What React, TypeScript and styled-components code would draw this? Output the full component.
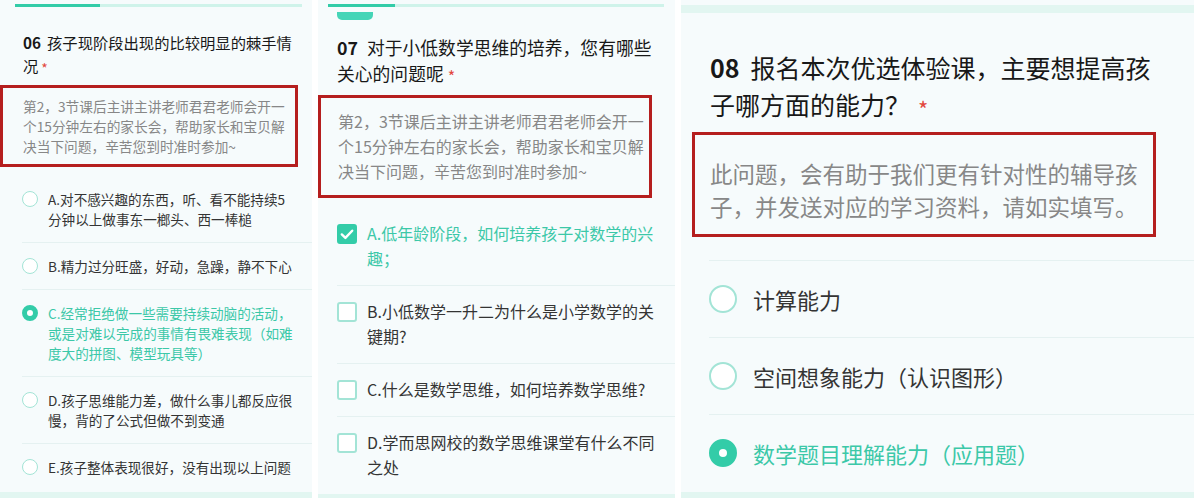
import React from "react";
import styled, { createGlobalStyle, css } from "styled-components";

const palette = {
  teal: "#33cca8",
  tealText: "#3cc8a8",
  tealRing: "#a3e4d6",
  track: "#cff3ea",
  stripe: "#e2f6f1",
  title: "#181818",
  text: "#343434",
  hint: "#878787",
  red: "#b51e1e",
  star: "#e2473d",
  rule: "#e5f1f1",
  panel: "#f6fbfc",
};

const GlobalStyle = createGlobalStyle`
  html, body {
    margin: 0;
    padding: 0;
    background: #fff;
  }
  body {
    font-family: "Noto Sans CJK SC", "Noto Sans", sans-serif;
    -webkit-font-smoothing: antialiased;
  }
  * { box-sizing: border-box; }
`;

type Kind = "radio" | "check";

interface ISize {
  width: number;
  titleSize: number;
  titleLh: number;
  titleTop: number;
  titlePad: string;
  numGap: number;
  starGap: number;
  starSize: number;
  hintSize: number;
  hintLh: number;
  hintMargin: string;
  hintPad: string;
  hintWidth: number;
  optInset: number;
  optTop: number;
  optPad: number;
  optSize: number;
  optLh: number;
  optGap: number;
  optWidth: number;
  mark: number;
  ring: number;
  dot: number;
  leadRule: boolean;
}

interface IQuestion {
  num: string;
  title: string;
  hint: string;
  options: string[];
  selected: number;
  kind: Kind;
  size: ISize;
  header: React.ReactNode;
}

const HINT =
  "第2，3节课后主讲主讲老师君君老师会开一个15分钟左右的家长会，帮助家长和宝贝解决当下问题，辛苦您到时准时参加~";

function Mark({ kind, on, size }: { kind: Kind; on: boolean; size: ISize }) {
  if (kind === "check") {
    return (
      <CheckBox $d={size.mark} $on={on} $lh={size.optLh}>
        {on && (
          <svg width={size.mark} height={size.mark} viewBox="0 0 20 20">
            <path
              d="M4.8 10.4l3.6 3.5 6.8-7.2"
              fill="none"
              stroke="#fff"
              strokeWidth="2.4"
              strokeLinecap="round"
              strokeLinejoin="round"
            />
          </svg>
        )}
      </CheckBox>
    );
  }
  return (
    <Radio
      $d={size.mark}
      $on={on}
      $ring={size.ring}
      $dot={size.dot}
      $lh={size.optLh}
    />
  );
}

function Question({
  num,
  title,
  hint,
  options,
  selected,
  kind,
  size,
  header,
}: IQuestion) {
  return (
    <Panel $w={size.width}>
      {header}
      <Title
        $size={size.titleSize}
        $lh={size.titleLh}
        $top={size.titleTop}
        $pad={size.titlePad}
      >
        <QNum $gap={size.numGap}>{num}</QNum>
        <span>{title}</span>
        <Star $gap={size.starGap} $size={size.starSize}>
          *
        </Star>
      </Title>
      <Hint
        $size={size.hintSize}
        $lh={size.hintLh}
        $margin={size.hintMargin}
        $pad={size.hintPad}
        $w={size.hintWidth}
      >
        {hint}
      </Hint>
      <OptionList $inset={size.optInset} $top={size.optTop}>
        {options.map((label, i) => (
          <OptionRow
            key={label}
            $pad={size.optPad}
            $gap={size.optGap}
            $lead={size.leadRule}
          >
            <Mark kind={kind} on={i === selected} size={size} />
            <OptionText
              $size={size.optSize}
              $lh={size.optLh}
              $w={size.optWidth}
              $on={i === selected}
            >
              {label}
            </OptionText>
          </OptionRow>
        ))}
      </OptionList>
      <Footer />
    </Panel>
  );
}

const small: ISize = {
  width: 312,
  titleSize: 15.3,
  titleLh: 23,
  titleTop: 24,
  titlePad: "0 14px 0 23px",
  numGap: 6,
  starGap: 3,
  starSize: 14,
  hintSize: 13.7,
  hintLh: 20,
  hintMargin: "8px 0 0",
  hintPad: "8px 4px 8px 20px",
  hintWidth: 298,
  optInset: 22,
  optTop: 9,
  optPad: 13,
  optSize: 13.6,
  optLh: 20,
  optGap: 10,
  optWidth: 248,
  mark: 16,
  ring: 1.5,
  dot: 5,
  leadRule: false,
};

const medium: ISize = {
  width: 357,
  titleSize: 17.8,
  titleLh: 26,
  titleTop: 13.5,
  titlePad: "0 13px 0 19px",
  numGap: 9,
  starGap: 4,
  starSize: 16,
  hintSize: 16,
  hintLh: 25,
  hintMargin: "9px 0 0",
  hintPad: "11px 0 11px 17px",
  hintWidth: 334,
  optInset: 19,
  optTop: 10,
  optPad: 13.5,
  optSize: 16,
  optLh: 25,
  optGap: 10,
  optWidth: 294,
  mark: 20,
  ring: 2,
  dot: 0,
  leadRule: false,
};

const large: ISize = {
  width: 513,
  titleSize: 25,
  titleLh: 37,
  titleTop: 36,
  titlePad: "0 28px 0 29px",
  numGap: 11,
  starGap: 8,
  starSize: 22,
  hintSize: 22.5,
  hintLh: 33,
  hintMargin: "9px 0 0 11px",
  hintPad: "22px 0 11px 15px",
  hintWidth: 464,
  optInset: 28,
  optTop: 23,
  optPad: 23,
  optSize: 22,
  optLh: 30,
  optGap: 16,
  optWidth: 440,
  mark: 28,
  ring: 2.5,
  dot: 8,
  leadRule: true,
};

export default function App() {
  return (
    <>
      <GlobalStyle />
      <Strip>
        <Question
          num="06"
          title="孩子现阶段出现的比较明显的棘手情况"
          hint={HINT}
          kind="radio"
          selected={2}
          size={small}
          header={<Track $margin="4px 10px 0 15px" $h={3} $fill={85} />}
          options={[
            "A.对不感兴趣的东西，听、看不能持续5分钟以上做事东一榔头、西一棒槌",
            "B.精力过分旺盛，好动，急躁，静不下心",
            "C.经常拒绝做一些需要持续动脑的活动，或是对难以完成的事情有畏难表现（如难度大的拼图、模型玩具等）",
            "D.孩子思维能力差，做什么事儿都反应很慢，背的了公式但做不到变通",
            "E.孩子整体表现很好，没有出现以上问题",
          ]}
        />
        <Question
          num="07"
          title="对于小低数学思维的培养，您有哪些关心的问题呢"
          hint={HINT}
          kind="check"
          selected={0}
          size={medium}
          header={
            <>
              <Track $margin="4px 11px 0 10px" $h={3} $fill={67} />
              <Tab />
            </>
          }
          options={[
            "A.低年龄阶段，如何培养孩子对数学的兴趣；",
            "B.小低数学一升二为什么是小学数学的关键期?",
            "C.什么是数学思维，如何培养数学思维?",
            "D.学而思网校的数学思维课堂有什么不同之处",
          ]}
        />
        <Question
          num="08"
          title="报名本次优选体验课，主要想提高孩子哪方面的能力？"
          hint="此问题，会有助于我们更有针对性的辅导孩子，并发送对应的学习资料，请如实填写。"
          kind="radio"
          selected={2}
          size={large}
          header={<Track $margin="5px 0 0" $h={8} $fill={0} $pale />}
          options={[
            "计算能力",
            "空间想象能力（认识图形）",
            "数学题目理解能力（应用题）",
          ]}
        />
      </Strip>
    </>
  );
}

const Strip = styled.main`
  display: flex;
  gap: 6px;
  width: 1200px;
  height: 504px;
  background: #fff;
`;

const Panel = styled.section<{ $w: number }>`
  display: flex;
  flex-direction: column;
  flex-shrink: 0;
  width: ${({ $w }) => $w}px;
  height: 498px;
  background: ${palette.panel};
  overflow: hidden;
`;

const Track = styled.div<{
  $margin: string;
  $h: number;
  $fill: number;
  $pale?: boolean;
}>`
  position: relative;
  flex-shrink: 0;
  margin: ${({ $margin }) => $margin};
  height: ${({ $h }) => $h}px;
  background: ${({ $pale }) => ($pale ? palette.stripe : palette.track)};

  &::before {
    content: "";
    position: absolute;
    left: 0;
    top: 0;
    bottom: 0;
    width: ${({ $fill }) => $fill}px;
    background: ${palette.teal};
  }
`;

const Tab = styled.span`
  display: block;
  flex-shrink: 0;
  width: 36px;
  height: 8px;
  margin: 5px 0 0 19px;
  border-radius: 0 0 5px 5px;
  background: #45d5b7;
`;

const Title = styled.h2<{
  $size: number;
  $lh: number;
  $top: number;
  $pad: string;
}>`
  margin: ${({ $top }) => $top}px 0 0;
  padding: ${({ $pad }) => $pad};
  font-size: ${({ $size }) => $size}px;
  line-height: ${({ $lh }) => $lh}px;
  font-weight: 400;
  color: ${palette.title};
`;

const QNum = styled.b<{ $gap: number }>`
  font-weight: 700;
  margin-right: ${({ $gap }) => $gap}px;
`;

const Star = styled.span<{ $gap: number; $size: number }>`
  display: inline-block;
  margin-left: ${({ $gap }) => $gap}px;
  color: ${palette.star};
  font-size: ${({ $size }) => $size}px;
  vertical-align: middle;
  line-height: 1;
`;

const Hint = styled.p<{
  $size: number;
  $lh: number;
  $margin: string;
  $pad: string;
  $w: number;
}>`
  flex-shrink: 0;
  width: ${({ $w }) => $w}px;
  margin: ${({ $margin }) => $margin};
  padding: ${({ $pad }) => $pad};
  border: 3px solid ${palette.red};
  font-size: ${({ $size }) => $size}px;
  line-height: ${({ $lh }) => $lh}px;
  color: ${palette.hint};
`;

const OptionList = styled.ul<{ $inset: number; $top: number }>`
  list-style: none;
  margin: ${({ $top }) => $top}px 0 0 ${({ $inset }) => $inset}px;
  padding: 0;
`;

const OptionRow = styled.li<{ $pad: number; $gap: number; $lead: boolean }>`
  display: flex;
  align-items: flex-start;
  gap: ${({ $gap }) => $gap}px;
  padding: ${({ $pad }) => $pad}px 0;
  border-bottom: 1px solid ${palette.rule};

  &:last-child {
    border-bottom: none;
  }

  ${({ $lead }) =>
    $lead &&
    css`
      &:first-child {
        border-top: 1px solid ${palette.rule};
      }
    `}
`;

const Radio = styled.span<{
  $d: number;
  $on: boolean;
  $ring: number;
  $dot: number;
  $lh: number;
}>`
  flex-shrink: 0;
  width: ${({ $d }) => $d}px;
  height: ${({ $d }) => $d}px;
  margin-top: ${({ $d, $lh }) => ($lh - $d) / 2}px;
  border-radius: 50%;
  background: #fff;
  border: ${({ $ring }) => $ring}px solid ${palette.tealRing};

  ${({ $on, $d, $dot }) =>
    $on &&
    css`
      border: ${($d - $dot) / 2}px solid ${palette.teal};
    `}
`;

const CheckBox = styled.span<{ $d: number; $on: boolean; $lh: number }>`
  display: flex;
  flex-shrink: 0;
  width: ${({ $d }) => $d}px;
  height: ${({ $d }) => $d}px;
  margin-top: ${({ $d, $lh }) => ($lh - $d) / 2}px;
  border-radius: 3px;
  background: #fff;
  border: 2px solid ${palette.tealRing};

  svg {
    margin: -2px;
  }

  ${({ $on }) =>
    $on &&
    css`
      background: ${palette.teal};
      border-color: ${palette.teal};
    `}
`;

const OptionText = styled.span<{
  $size: number;
  $lh: number;
  $w: number;
  $on: boolean;
}>`
  width: ${({ $w }) => $w}px;
  font-size: ${({ $size }) => $size}px;
  line-height: ${({ $lh }) => $lh}px;
  color: ${({ $on }) => ($on ? palette.tealText : palette.text)};
`;

const Footer = styled.div`
  flex-shrink: 0;
  height: 6px;
  margin-top: auto;
  background: ${palette.stripe};
`;
